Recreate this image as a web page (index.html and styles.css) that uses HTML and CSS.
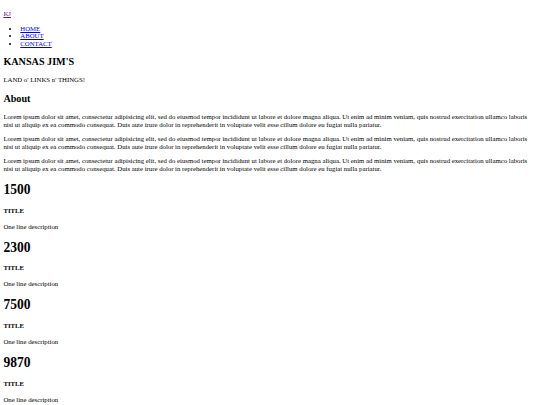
FILE: index.html
```html
<!DOCTYPE html>
<html>
<head>
<meta charset="utf-8">
<title>Kansas Jim's</title>
<link rel="stylesheet" href="styles.css">
</head>
<body class="page">
<header class="site-header">
  <p class="logo"><a class="logo-link" href="#">KJ</a></p>
  <nav>
    <ul class="nav-list">
      <li><a class="nav-link" href="#">HOME</a></li>
      <li><a class="nav-link" href="#">ABOUT</a></li>
      <li><a class="nav-link" href="#">CONTACT</a></li>
    </ul>
  </nav>
</header>
<section class="hero">
  <h2 class="hero-title">KANSAS JIM'S</h2>
  <p class="text">LAND o' LINKS n' THINGS!</p>
</section>
<section class="about">
  <h2 class="section-title">About</h2>
  <p class="text">Lorem ipsum dolor sit amet, consectetur adipisicing elit, sed do eiusmod tempor incididunt ut labore et dolore magna aliqua. Ut enim ad minim veniam, quis nostrud exercitation ullamco laboris nisi ut aliquip ex ea commodo consequat. Duis aute irure dolor in reprehenderit in voluptate velit esse cillum dolore eu fugiat nulla pariatur.</p>
  <p class="text">Lorem ipsum dolor sit amet, consectetur adipisicing elit, sed do eiusmod tempor incididunt ut labore et dolore magna aliqua. Ut enim ad minim veniam, quis nostrud exercitation ullamco laboris nisi ut aliquip ex ea commodo consequat. Duis aute irure dolor in reprehenderit in voluptate velit esse cillum dolore eu fugiat nulla pariatur.</p>
  <p class="text">Lorem ipsum dolor sit amet, consectetur adipisicing elit, sed do eiusmod tempor incididunt ut labore et dolore magna aliqua. Ut enim ad minim veniam, quis nostrud exercitation ullamco laboris nisi ut aliquip ex ea commodo consequat. Duis aute irure dolor in reprehenderit in voluptate velit esse cillum dolore eu fugiat nulla pariatur.</p>
</section>
<section class="stats">
  <div class="stat">
    <h1 class="stat-number">1500</h1>
    <h4 class="stat-title">TITLE</h4>
    <p class="text">One line description</p>
  </div>
  <div class="stat">
    <h1 class="stat-number">2300</h1>
    <h4 class="stat-title">TITLE</h4>
    <p class="text">One line description</p>
  </div>
  <div class="stat">
    <h1 class="stat-number">7500</h1>
    <h4 class="stat-title">TITLE</h4>
    <p class="text">One line description</p>
  </div>
  <div class="stat">
    <h1 class="stat-number">9870</h1>
    <h4 class="stat-title">TITLE</h4>
    <p class="text">One line description</p>
  </div>
</section>
</body>
</html>
```
FILE: styles.css
```css
html {
  background: #fff;
}
.page {
  margin: 3.4px;
  font-family: "Liberation Serif", "Times New Roman", serif;
  font-size: 6.77px;
  line-height: 1.149;
  color: #000;
}
.logo {
  margin: 1em 0;
}
.logo-link {
  color: #551a8b;
}
.nav-list {
  margin: 1em 0;
  padding-left: 2.5em;
  list-style: disc;
}
.nav-link {
  color: #0000ee;
}
.hero-title,
.section-title {
  font-size: 1.5em;
  font-weight: bold;
  margin: 0.83em 0;
}
.text {
  margin: 1em 0;
}
.stat-number {
  font-size: 2em;
  font-weight: bold;
  margin: 0.67em 0;
}
.stat-title {
  font-size: 1em;
  font-weight: bold;
  margin: 1.25em 0;
}
```
